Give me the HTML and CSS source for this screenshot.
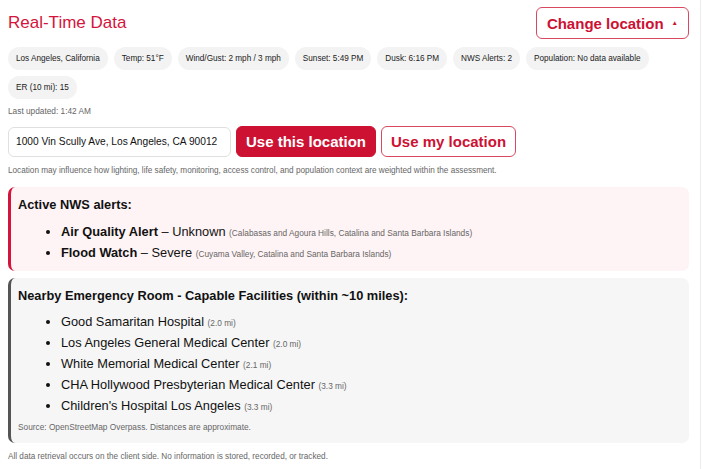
FILE: index.html
```html
<!DOCTYPE html>
<html lang="en">
<head>
<meta charset="utf-8">
<title>Real-Time Data</title>
<link rel="stylesheet" href="styles.css">
</head>
<body>
<div class="page">
  <header class="head">
    <h1 class="title">Real-Time Data</h1>
    <button class="btn-outline change">Change location <span class="caret">▲</span></button>
  </header>

  <div class="pills">
    <span class="pill">Los Angeles, California</span>
    <span class="pill">Temp: 51°F</span>
    <span class="pill">Wind/Gust: 2 mph / 3 mph</span>
    <span class="pill">Sunset: 5:49 PM</span>
    <span class="pill">Dusk: 6:16 PM</span>
    <span class="pill">NWS Alerts: 2</span>
    <span class="pill">Population: No data available</span>
    <span class="pill">ER (10 mi): 15</span>
  </div>

  <p class="updated">Last updated: 1:42 AM</p>

  <div class="loc-row">
    <input class="addr" type="text" value="1000 Vin Scully Ave, Los Angeles, CA 90012">
    <button class="btn-solid">Use this location</button>
    <button class="btn-outline my">Use my location</button>
  </div>

  <p class="note">Location may influence how lighting, life safety, monitoring, access control, and population context are weighted within the assessment.</p>

  <section class="box alerts">
    <h2 class="box-title">Active NWS alerts:</h2>
    <ul class="list">
      <li><b>Air Quality Alert</b> – Unknown <small>(Calabasas and Agoura Hills, Catalina and Santa Barbara Islands)</small></li>
      <li><b>Flood Watch</b> – Severe <small>(Cuyama Valley, Catalina and Santa Barbara Islands)</small></li>
    </ul>
  </section>

  <section class="box er">
    <h2 class="box-title">Nearby Emergency Room - Capable Facilities (within ~10 miles):</h2>
    <ul class="list er-list">
      <li>Good Samaritan Hospital <small>(2.0 mi)</small></li>
      <li>Los Angeles General Medical Center <small>(2.0 mi)</small></li>
      <li>White Memorial Medical Center <small>(2.1 mi)</small></li>
      <li>CHA Hollywood Presbyterian Medical Center <small>(3.3 mi)</small></li>
      <li>Children's Hospital Los Angeles <small>(3.3 mi)</small></li>
    </ul>
    <p class="source">Source: OpenStreetMap Overpass. Distances are approximate.</p>
  </section>

  <p class="foot">All data retrieval occurs on the client side. No information is stored, recorded, or tracked.</p>
</div>
</body>
</html>
```

FILE: styles.css
```css
* { box-sizing: border-box; }
html, body { margin: 0; padding: 0; background: #fff; }
body {
  font-family: "Liberation Sans", Arial, sans-serif;
  color: #111;
}
.page {
  width: 701px;
  min-height: 469px;
  border-right: 1px solid #ececec;
  padding: 7px 11px 0 8px;
}
.head {
  display: flex;
  justify-content: space-between;
  align-items: center;
}
.title {
  margin: 0;
  font-size: 17px;
  font-weight: normal;
  color: #d4143c;
  line-height: 20px;
}
.btn-outline {
  font-family: inherit;
  background: #fff;
  color: #cc1133;
  border: 1px solid #d9485f;
  border-radius: 6px;
  font-weight: bold;
  font-size: 15px;
  height: 31px;
  padding: 0 9px;
  cursor: pointer;
}
.change {
  height: 32px;
  padding: 0 10px 0 10px;
  display: flex;
  align-items: center;
  gap: 8px;
}
.caret { font-size: 6.5px; line-height: 1; }
.pills {
  display: flex;
  flex-wrap: wrap;
  gap: 6px 6px;
  margin-top: 8px;
}
.pill {
  background: #f3f3f3;
  border-radius: 12px;
  font-size: 8.2px;
  line-height: 11px;
  padding: 6px 8px;
  color: #222;
}
.updated {
  margin: 6px 0 0;
  font-size: 8.3px;
  line-height: 12px;
  color: #666;
}
.loc-row {
  display: flex;
  align-items: center;
  gap: 5px;
  margin-top: 9px;
}
.addr {
  width: 223px;
  height: 30px;
  border: 1px solid #e0e0e0;
  border-radius: 6px;
  padding: 0 7px;
  font-family: inherit;
  font-size: 10.2px;
  color: #111;
}
.btn-solid {
  font-family: inherit;
  background: #cc1133;
  color: #fff;
  border: 1px solid #cc1133;
  border-radius: 6px;
  font-weight: bold;
  font-size: 15px;
  height: 31px;
  padding: 0 9px;
}
.note {
  margin: 8px 0 0;
  font-size: 8.2px;
  line-height: 12px;
  color: #666;
}
.box {
  border-radius: 7px;
  padding: 10px 10px 8px 7px;
  margin-top: 10px;
}
.alerts {
  background: #fff4f5;
  border-left: 3px solid #d4143c;
}
.er {
  background: #f6f6f6;
  border-left: 3px solid #555;
  margin-top: 7px;
  padding-bottom: 10px;
}
.box-title {
  margin: 0;
  font-size: 12.8px;
  line-height: 15px;
  font-weight: bold;
  color: #111;
}
.list {
  margin: 9px 0 0;
  padding-left: 43px;
  font-size: 12.8px;
  line-height: 21px;
}
.er-list { margin-top: 8px; }
.list small {
  font-size: 8.3px;
  line-height: 1;
  color: #666;
}
.source {
  margin: 6px 0 0;
  font-size: 8.3px;
  line-height: 11px;
  color: #666;
}
.foot {
  margin: 8px 0 0;
  font-size: 8.2px;
  line-height: 12px;
  color: #666;
}
```
